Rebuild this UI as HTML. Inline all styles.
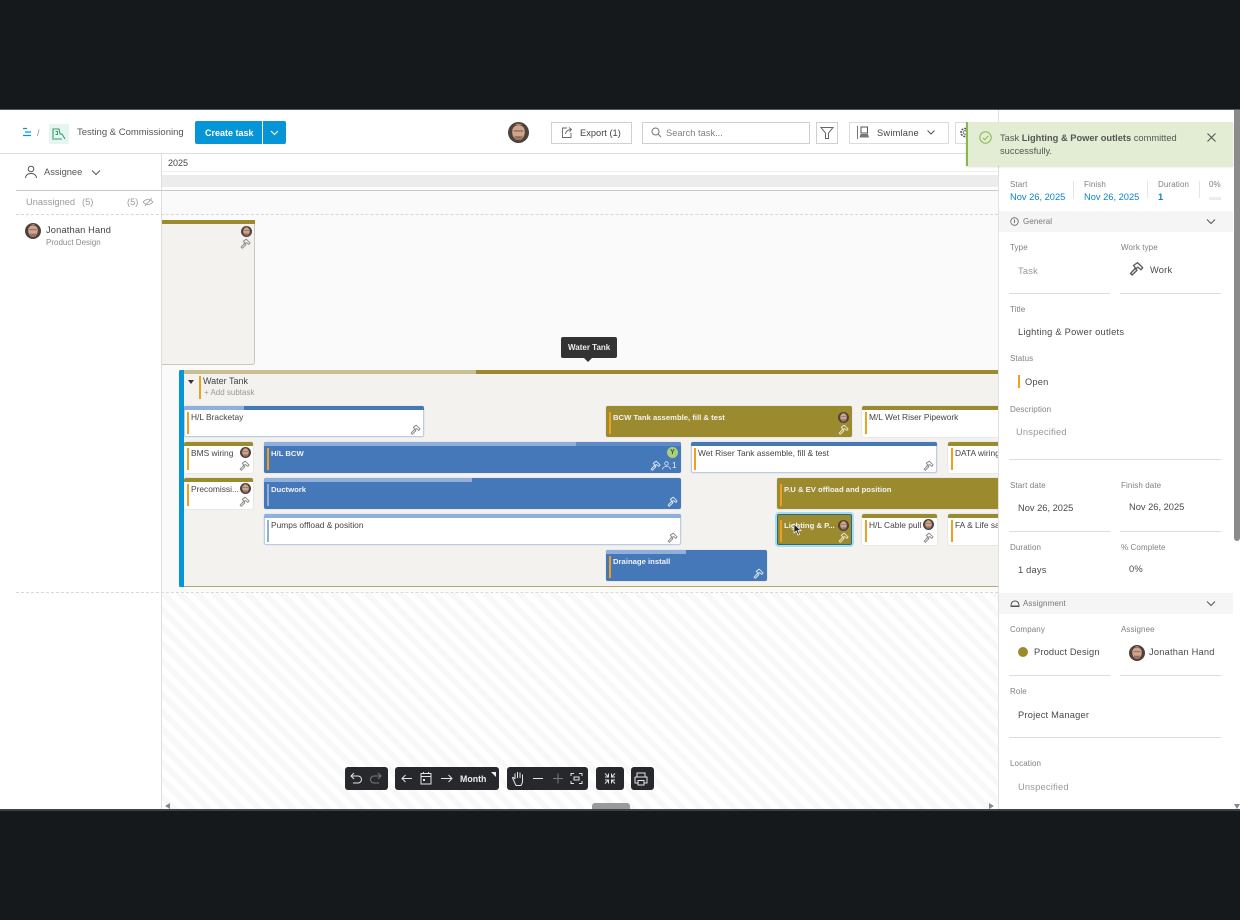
<!DOCTYPE html>
<html lang="en"><head><meta charset="utf-8"><title>Testing &amp; Commissioning</title>
<style>
html,body{margin:0;padding:0;background:#15191b;width:1240px;height:920px;overflow:hidden}
body{position:relative;font-family:"Liberation Sans",sans-serif;color:#3c3c3c}
div,span.a,svg.a{position:absolute;box-sizing:border-box}
.t{position:absolute;white-space:nowrap;line-height:12px;font-size:9px}
.l{color:#808080;font-size:8px;letter-spacing:.1px;margin-top:1px}
.v{font-size:9.3px;color:#4a4a4a;letter-spacing:.2px;margin-top:1px}
.d{letter-spacing:0}
.ln{height:1px;background:#dcdcdc}
.c{border-radius:2px;height:31px;overflow:hidden;box-shadow:0 0 1px rgba(0,0,0,.25)}
.c .top{left:0;top:0;height:4px;width:100%}
.c .pg{left:0;top:0;height:4px;background:#8fb0dc}
.c .bar{left:3px;top:6px;width:2px;height:22px;background:#f0a020}
.c .t{left:7px;top:5px;font-size:8.4px}
.w{background:#fff;color:#444}
.b{background:#4478b8;color:#fff}
.o{background:#9c8a2f;color:#fff}
.c.b .t,.c.o .t{font-weight:bold;color:#f4f4f4;font-size:7.7px;margin-top:1px}
.sb{box-shadow:inset 0 0 0 1px #b7cde8,0 0 1px rgba(0,0,0,.25)}
.tb{background:#26282b;border-radius:3px;top:767px;height:23px}
</style></head><body>
<svg width="0" height="0" style="position:absolute"><defs>
<symbol id="h" viewBox="0 0 12 12"><path d="M1.200 10 4.900 6 6.400 7.400 2.500 11.200Z M3.600 3.600 6.800 1.300 11 5.400 9.600 7 7 4.900 5.600 6.100Z" fill="none" stroke="currentColor" stroke-width="1.050" stroke-linejoin="round"/></symbol>
<symbol id="av" viewBox="0 0 20 20"><circle cx="10" cy="10" r="10" fill="#4e423c"/><ellipse cx="10" cy="9.500" rx="6" ry="7.800" fill="#d0a58c"/><path d="M4.500 5.500Q10 .5 15.500 5.500L15 4Q10 1 5 4Z" fill="#3a2e28"/><path d="M5.500 8.500h3.500M11 8.500h3.500M9 8.500h2" fill="none" stroke="#5a4d46" stroke-width=".8"/><path d="M6 13Q10 14 14 13L13.500 16.500Q10 18 6.500 16.500Z" fill="#96796a"/><path d="M8.500 14.500h3" stroke="#b04a4a" stroke-width=".7"/></symbol>
</defs></svg>

<!-- app frame -->
<div style="left:0;top:109px;width:1240px;height:1px;background:#55585a"></div>
<div style="left:0;top:110px;width:1240px;height:699px;background:#fff;overflow:hidden">
</div>
<div style="left:0;top:809px;width:1240px;height:2px;background:#3e4244"></div>

<!-- header -->
<div style="left:0;top:153px;width:998px;height:1px;background:#dedede"></div>
<svg class="a" style="left:22px;top:127px" width="10" height="10" viewBox="0 0 10 10"><path d="M1 1.500h4M3 5h6M1 8.500h8" stroke="#0696d7" stroke-width="1.200" fill="none"/></svg>
<span class="t" style="left:37px;top:127px;color:#888">/</span>
<div style="left:49px;top:124px;width:20px;height:20px;background:#e5f6f2;border-radius:2px"></div>
<svg class="a" style="left:51px;top:126px" width="16" height="16" viewBox="0 0 16 16"><path d="M2 12V3h6l1 5 2 0 3 5M1 13h10" fill="none" stroke="#3a9a6a" stroke-width="1.100"/><path d="M4.500 5.500h2v3h-2" fill="none" stroke="#3a9a6a"/></svg>
<span class="t" style="left:77px;top:127px;font-size:9.5px;color:#555">Testing &amp; Commissioning</span>
<div style="left:195px;top:121px;width:67px;height:23px;background:#0696d7;border-radius:2px 0 0 2px"></div>
<span class="t" style="left:205px;top:127px;font-size:9px;color:#fff;font-weight:bold">Create task</span>
<div style="left:263px;top:121px;width:23px;height:23px;background:#0696d7;border-radius:0 2px 2px 0"></div>
<svg class="a" style="left:269px;top:129px" width="11" height="8" viewBox="0 0 11 8"><path d="M2 2l3.500 3.500L9 2" fill="none" stroke="#fff" stroke-width="1.100"/></svg>
<svg class="a" style="left:508px;top:122px" width="21" height="21"><use href="#av"/></svg>
<div style="left:551px;top:122px;width:81px;height:22px;border:1px solid #d0d0d0"></div>
<svg class="a" style="left:561px;top:126px" width="12" height="13" viewBox="0 0 12 13"><path d="M6 2H1.500v9.500H10V7M4.500 8Q5 4 10 3.500M8 1.500l2.500 2L8.500 6" fill="none" stroke="#666" stroke-width=".9"/></svg>
<span class="t" style="left:580px;top:127px;font-size:9.300px;color:#444">Export (1)</span>
<div style="left:642px;top:122px;width:168px;height:22px;border:1px solid #d0d0d0"></div>
<svg class="a" style="left:651px;top:127px" width="11" height="11" viewBox="0 0 11 11"><circle cx="4.500" cy="4.500" r="3.500" fill="none" stroke="#777"/><path d="M7 7l3 3" stroke="#777"/></svg>
<span class="t" style="left:666px;top:127px;font-size:9.300px;color:#808080">Search task...</span>
<div style="left:816px;top:122px;width:22px;height:22px;border:1px solid #d0d0d0"></div>
<svg class="a" style="left:820px;top:126px" width="14" height="14" viewBox="0 0 14 14"><path d="M1 1.500h12L8.500 7v5.500h-3V7Z" fill="none" stroke="#666"/></svg>
<div style="left:849px;top:122px;width:100px;height:22px;border:1px solid #dcdcdc"></div>
<svg class="a" style="left:857px;top:125px" width="13" height="15" viewBox="0 0 13 15"><path d="M.5 1v13" stroke="#777" fill="none"/><path d="M4 2h6.500v6H4Z" fill="none" stroke="#555"/><path d="M3.500 9h7.500l1 3.500H2.500Z" fill="#777"/></svg>
<span class="t" style="left:877px;top:127px;font-size:9.300px;color:#444;letter-spacing:.2px">Swimlane</span>
<svg class="a" style="left:926px;top:129px" width="10" height="7" viewBox="0 0 10 7"><path d="M1.500 1.500L5 5l3.500-3.500" fill="none" stroke="#555"/></svg>
<div style="left:955px;top:122px;width:14px;height:22px;border:1px solid #dcdcdc"></div>
<svg class="a" style="left:959px;top:126px" width="12" height="13" viewBox="0 0 12 13"><circle cx="6" cy="6.500" r="4" fill="none" stroke="#555" stroke-width="1.500" stroke-dasharray="2 1"/><circle cx="6" cy="6.500" r="1.800" fill="none" stroke="#555" stroke-width=".8"/></svg>

<!-- left column -->
<div style="left:161px;top:154px;width:1px;height:655px;background:#dedede"></div>
<svg class="a" style="left:24px;top:165px" width="14" height="14" viewBox="0 0 14 14"><circle cx="7" cy="4" r="2.800" fill="none" stroke="#555"/><path d="M1.500 13Q2 8.500 7 8.500T12.500 13" fill="none" stroke="#555"/></svg>
<span class="t" style="left:44px;top:166px;font-size:9.300px;color:#555">Assignee</span>
<svg class="a" style="left:91px;top:169px" width="10" height="7" viewBox="0 0 10 7"><path d="M1 1.500L5 5.500l4-4" fill="none" stroke="#555"/></svg>
<div style="left:16px;top:190px;width:982px;height:1px;background:#c9c9c9"></div>
<span class="t" style="left:26px;top:196px;font-size:9.300px;color:#9a9a9a">Unassigned</span>
<span class="t" style="left:82px;top:196px;font-size:9.300px;color:#9a9a9a">(5)</span>
<span class="t" style="left:127px;top:196px;font-size:9.300px;color:#9a9a9a">(5)</span>
<svg class="a" style="left:142px;top:197px" width="12" height="10" viewBox="0 0 12 10"><path d="M1 5q5-5 10 0q-5 5-10 0M3 9l7-8" fill="none" stroke="#9a9a9a" stroke-width=".8"/></svg>
<svg class="a" style="left:25px;top:223px" width="16" height="16"><use href="#av"/></svg>
<span class="t" style="left:46px;top:224px;font-size:9.300px;color:#444;letter-spacing:.15px">Jonathan Hand</span>
<span class="t" style="left:46px;top:237px;font-size:8px;color:#8c8c8c">Product Design</span>

<!-- timeline head -->
<span class="t" style="left:168px;top:157px;font-size:9px;color:#444">2025</span>
<div style="left:162px;top:171px;width:836px;height:1px;background:#efefef"></div>
<div style="left:162px;top:175px;width:836px;height:12px;background:#ececec"></div>
<div style="left:162px;top:191px;width:836px;height:401px;background:#fafafb"></div>
<div style="left:16px;top:214px;width:982px;border-top:1px dashed #d8d8d8"></div>
<div style="left:16px;top:592px;width:982px;border-top:1px dashed #d8d8d8"></div>
<div style="left:162px;top:593px;width:836px;height:216px;background:repeating-linear-gradient(45deg,#fff 0 6px,#f8f8f8 6px 12px)"></div>

<!-- first group card -->
<div style="left:162px;top:220px;width:93px;height:145px;background:#f3f2ef;border:1px solid #c9c7c0;border-left:0;border-radius:0 2px 3px 0"></div>
<div style="left:162px;top:220px;width:93px;height:4px;background:#9c8a2f"></div>
<svg class="a" style="left:241px;top:226px" width="11" height="11"><use href="#av"/></svg>
<svg class="a" style="left:240px;top:238px;color:#8a8a8a" width="11" height="11"><use href="#h"/></svg>

<!-- tooltip -->
<div style="left:561px;top:337px;width:56px;height:21px;background:#333;border-radius:2px"></div>
<div style="left:584px;top:358px;width:0;height:0;border:4px solid transparent;border-top-color:#333;border-bottom:0"></div>
<span class="t" style="left:568px;top:342px;font-size:8px;font-weight:bold;color:#eee">Water Tank</span>

<!-- parent -->
<div style="left:179px;top:370px;width:819px;height:217px;background:#f3f2ef;border-bottom:1px solid #b5a968"></div>
<div style="left:179px;top:370px;width:819px;height:4px;background:#9c8a2f"></div>
<div style="left:179px;top:370px;width:297px;height:4px;background:#c9c091"></div>
<div style="left:179px;top:370px;width:5px;height:217px;background:#0696d7;border-radius:2px 0 0 2px"></div>
<div style="left:188px;top:380px;width:0;height:0;border:3.500px solid transparent;border-top:4px solid #333;border-bottom:0"></div>
<div style="left:199px;top:376px;width:2px;height:23px;background:#f0a020"></div>
<span class="t" style="left:203px;top:375px;font-size:9px;color:#444">Water Tank</span>
<span class="t" style="left:204px;top:387px;font-size:8px;color:#999">+ Add subtask</span>

<!-- tasks -->
<div class="c w sb" style="left:184px;top:406px;width:240px"><div class="top" style="background:#4478b8"></div><div class="pg" style="width:60px"></div><div class="bar"></div><span class="t">H/L Bracketay</span><svg class="a" style="right:3px;bottom:2px;color:#8a8a8a" width="11" height="11"><use href="#h"/></svg></div>

<div class="c w" style="left:184px;top:442px;width:69px"><div class="top" style="background:#9c8a2f"></div><div class="bar"></div><span class="t">BMS wiring</span><svg class="a" style="right:2px;top:5px" width="11" height="11"><use href="#av"/></svg><svg class="a" style="right:3px;bottom:2px;color:#8a8a8a" width="11" height="11"><use href="#h"/></svg></div>

<div class="c w" style="left:184px;top:478px;width:69px"><div class="top" style="background:#9c8a2f"></div><div class="bar"></div><span class="t">Precomissi...</span><svg class="a" style="right:2px;top:5px" width="11" height="11"><use href="#av"/></svg><svg class="a" style="right:3px;bottom:2px;color:#8a8a8a" width="11" height="11"><use href="#h"/></svg></div>

<div class="c b" style="left:264px;top:442px;width:417px"><div class="top" style="background:#5f8cc6"></div><div class="pg" style="width:312px"></div><div class="bar"></div><span class="t">H/L BCW</span><div style="right:3px;top:5px;width:11px;height:11px;border-radius:50%;background:#a9cf7a;color:#3a5a20;font-size:7px;line-height:11px;text-align:center;font-weight:bold">Y</div><svg class="a" style="right:20px;bottom:2px;color:#dce6f3" width="11" height="11"><use href="#h"/></svg><svg class="a" style="right:10px;bottom:3px" width="9" height="9" viewBox="0 0 9 9"><circle cx="4.500" cy="2.500" r="1.800" fill="none" stroke="#dce6f3" stroke-width=".8"/><path d="M.5 8.500Q1 5.500 4.500 5.500T8.500 8.500" fill="none" stroke="#dce6f3" stroke-width=".8"/></svg><span class="t" style="left:408px;top:16px;color:#e8eef7;font-weight:normal;font-size:8.400px">1</span></div>

<div class="c b" style="left:264px;top:478px;width:417px"><div class="pg" style="width:208px"></div><div class="bar" style="background:#8fb0dc"></div><span class="t">Ductwork</span><svg class="a" style="right:3px;bottom:2px;color:#dce6f3" width="11" height="11"><use href="#h"/></svg></div>

<div class="c w sb" style="left:264px;top:514px;width:417px"><div class="top" style="background:#8fb0dc"></div><div class="bar" style="background:#8fb0dc"></div><span class="t">Pumps offload &amp; position</span><svg class="a" style="right:3px;bottom:2px;color:#8a8a8a" width="11" height="11"><use href="#h"/></svg></div>

<div class="c o" style="left:606px;top:406px;width:246px"><div class="bar"></div><span class="t">BCW Tank assemble, fill &amp; test</span><svg class="a" style="right:3px;top:6px" width="11" height="11"><use href="#av"/></svg><svg class="a" style="right:3px;bottom:2px;color:#e8e4cc" width="11" height="11"><use href="#h"/></svg></div>

<div class="c w" style="left:862px;top:406px;width:136px;border-radius:2px 0 0 2px"><div class="top" style="background:#9c8a2f"></div><div class="bar"></div><span class="t">M/L Wet Riser Pipework</span></div>

<div class="c w sb" style="left:691px;top:442px;width:246px"><div class="top" style="background:#4478b8"></div><div class="bar"></div><span class="t">Wet Riser Tank assemble, fill &amp; test</span><svg class="a" style="right:3px;bottom:2px;color:#8a8a8a" width="11" height="11"><use href="#h"/></svg></div>

<div class="c w" style="left:948px;top:442px;width:50px;border-radius:2px 0 0 2px"><div class="top" style="background:#9c8a2f"></div><div class="bar"></div><span class="t">DATA wiring</span></div>

<div class="c o" style="left:777px;top:478px;width:221px;border-radius:2px 0 0 2px"><div class="bar"></div><span class="t">P.U &amp; EV offload and position</span></div>

<div class="c o" style="left:777px;top:514px;width:75px;overflow:visible;border:1px solid #2a6a78;box-shadow:0 0 0 2px #a5dcf0"><div class="bar" style="left:2px;top:5px"></div><span class="t" style="left:6px;top:4px">Lighting &amp; P...</span><svg class="a" style="right:2px;top:5px" width="11" height="11"><use href="#av"/></svg><svg class="a" style="right:2px;bottom:1px;color:#e8e4cc" width="11" height="11"><use href="#h"/></svg></div>
<svg class="a" style="left:793px;top:523px" width="9" height="13" viewBox="0 0 9 13"><path d="M1 1v9l2.300-2 1.700 4 1.500-.7L5 7.500h3Z" fill="#222" stroke="#fff" stroke-width=".7"/></svg>

<div class="c w" style="left:862px;top:514px;width:75px"><div class="top" style="background:#9c8a2f"></div><div class="bar"></div><span class="t">H/L Cable pull</span><svg class="a" style="right:3px;top:5px" width="11" height="11"><use href="#av"/></svg><svg class="a" style="right:3px;bottom:2px;color:#8a8a8a" width="11" height="11"><use href="#h"/></svg></div>

<div class="c w" style="left:948px;top:514px;width:50px;border-radius:2px 0 0 2px"><div class="top" style="background:#9c8a2f"></div><div class="bar"></div><span class="t">FA &amp; Life sa</span></div>

<div class="c b" style="left:606px;top:550px;width:161px"><div class="pg" style="width:80px"></div><div class="bar"></div><span class="t">Drainage install</span><svg class="a" style="right:3px;bottom:2px;color:#dce6f3" width="11" height="11"><use href="#h"/></svg></div>

<!-- toolbar -->
<div class="tb" style="left:345px;width:43px"></div>
<div class="tb" style="left:395px;width:104px"></div>
<div class="tb" style="left:507px;width:81px"></div>
<div class="tb" style="left:596px;width:28px"></div>
<div class="tb" style="left:631px;width:23px"></div>
<svg class="a" style="left:345px;top:767px" width="310" height="23" viewBox="0 0 310 23" fill="none" stroke="#e4e4e4" stroke-width="1">
<path d="M9 6L6 9l3 3M6 9h7a3.500 3.500 0 0 1 0 7H8"/>
<path d="M33 6l3 3-3 3M36 9h-7a3.500 3.500 0 0 0 0 7h5" stroke="#77797b"/>
<path d="M67 11.500H57M60.500 8l-3.500 3.500 3.500 3.500"/>
<path d="M76 6.500h10v10.500H76zM76 9.500h10M78.500 5v2M83.500 5v2"/><path d="M78 12h2v2h-2z" fill="#e4e4e4" stroke="none"/>
<path d="M96 11.500h11M103.500 8l3.500 3.500-3.500 3.500"/>
<path d="M170 12V6.500M172.500 11V5M175 11V5.500M177.500 12V7.500M170 12l-1.500-1.500Q167 10 168 12l3 6.500h5l1.500-3.500V10"/>
<path d="M188 11.500h10"/>
<path d="M208 11.500h10M213 6.500v10" stroke="#77797b"/>
<path d="M226 9V6.500h3M234 6.500h3V9M237 14v2.500h-3M229 16.500h-3V14M229 10h5v3h-5z"/>
<path d="M260 6.500l3.500 3.500M260 10h3.500V6.500M270 6.500L266.500 10M266.500 6.500V10h3.500M260 16.500l3.500-3.500M260 13h3.500v3.500M270 16.500L266.500 13M266.500 16.500V13h3.500"/>
<path d="M292 10V6h8v4M290 10h12v6h-3M293 16h-3v-6M293 13.500h6V18h-6z"/>
</svg>
<span class="t" style="left:460px;top:773px;font-size:8.800px;font-weight:bold;color:#eee">Month</span>
<div style="left:491px;top:772px;width:0;height:0;border-style:solid;border-width:0 5px 5px 0;border-color:transparent #eee transparent transparent"></div>

<!-- timeline scrollbar -->
<div style="left:165px;top:803px;width:0;height:0;border:3.500px solid transparent;border-right:5px solid #888;border-left:0"></div>
<div style="left:592px;top:803px;width:38px;height:6px;background:#9a9a9a;border-radius:3px 3px 0 0"></div>
<div style="left:989px;top:803px;width:0;height:0;border:3.500px solid transparent;border-left:5px solid #888;border-right:0"></div>

<!-- right panel -->
<div style="left:998px;top:110px;width:235px;height:699px;background:#fff;border-left:1px solid #e2e2e2"></div>
<div style="left:1234px;top:110px;width:6px;height:431px;background:#8b8b8b;border-radius:0 0 3px 3px"></div>
<div style="left:1234px;top:804px;width:0;height:0;border:3px solid transparent;border-top:5px solid #888;border-bottom:0"></div>

<span class="t l" style="left:1010px;top:178px">Start</span>
<span class="t" style="left:1010px;top:191px;font-size:9.300px;color:#0a84c6">Nov 26, 2025</span>
<div style="left:1073px;top:181px;width:1px;height:17px;background:#e4e4e4"></div>
<span class="t l" style="left:1084px;top:178px">Finish</span>
<span class="t" style="left:1084px;top:191px;font-size:9.300px;color:#0a84c6">Nov 26, 2025</span>
<div style="left:1147px;top:181px;width:1px;height:17px;background:#e4e4e4"></div>
<span class="t l" style="left:1158px;top:178px">Duration</span>
<span class="t" style="left:1158px;top:191px;font-size:9.300px;color:#0a84c6;font-weight:bold">1</span>
<div style="left:1199px;top:181px;width:1px;height:17px;background:#e4e4e4"></div>
<span class="t l" style="left:1209px;top:178px">0%</span>
<div style="left:1209px;top:197px;width:12px;height:3px;background:#ececec"></div>

<div style="left:999px;top:211px;width:234px;height:21px;background:#f5f5f5"></div>
<svg class="a" style="left:1010px;top:217px" width="9" height="9" viewBox="0 0 9 9"><circle cx="4.500" cy="4.500" r="3.800" fill="none" stroke="#666" stroke-width=".8"/><path d="M4.500 2.500v3.500" stroke="#666" stroke-width=".9"/></svg>
<span class="t l" style="left:1023px;top:215px;color:#777">General</span>
<svg class="a" style="left:1206px;top:218px" width="10" height="7" viewBox="0 0 10 7"><path d="M1 1.500L5 5.500l4-4" fill="none" stroke="#555"/></svg>

<span class="t l" style="left:1010px;top:241px">Type</span>
<span class="t v" style="left:1018px;top:264px;color:#999">Task</span>
<div class="ln" style="left:1009px;top:293px;width:101px"></div>
<span class="t l" style="left:1121px;top:241px">Work type</span>
<svg class="a" style="left:1129px;top:261px;color:#555" width="15" height="15"><use href="#h"/></svg>
<span class="t v" style="left:1150px;top:263px">Work</span>
<div class="ln" style="left:1120px;top:293px;width:101px"></div>

<span class="t l" style="left:1010px;top:303px">Title</span>
<span class="t v" style="left:1018px;top:325px;letter-spacing:.25px">Lighting &amp; Power outlets</span>
<span class="t l" style="left:1010px;top:352px">Status</span>
<div style="left:1018px;top:375px;width:2px;height:13px;background:#f0a020"></div>
<span class="t v" style="left:1025px;top:375px">Open</span>
<span class="t l" style="left:1010px;top:403px">Description</span>
<span class="t v" style="left:1016px;top:425px;color:#999">Unspecified</span>
<div class="ln" style="left:1009px;top:459px;width:212px"></div>

<span class="t l" style="left:1010px;top:479px">Start date</span>
<span class="t v d" style="left:1018px;top:501px">Nov 26, 2025</span>
<div class="ln" style="left:1009px;top:531px;width:101px"></div>
<span class="t l" style="left:1121px;top:479px">Finish date</span>
<span class="t v d" style="left:1129px;top:500px">Nov 26, 2025</span>
<div class="ln" style="left:1120px;top:531px;width:101px"></div>

<span class="t l" style="left:1010px;top:541px">Duration</span>
<span class="t v" style="left:1018px;top:563px">1 days</span>
<span class="t l" style="left:1121px;top:541px">% Complete</span>
<span class="t v" style="left:1129px;top:562px">0%</span>

<div style="left:999px;top:593px;width:234px;height:21px;background:#f5f5f5"></div>
<svg class="a" style="left:1010px;top:599px" width="10" height="9" viewBox="0 0 10 9"><path d="M1 7q0-5 4-5t4 5z M.5 7.500h9" fill="none" stroke="#555"/></svg>
<span class="t l" style="left:1023px;top:597px;color:#777">Assignment</span>
<svg class="a" style="left:1206px;top:600px" width="10" height="7" viewBox="0 0 10 7"><path d="M1 1.500L5 5.500l4-4" fill="none" stroke="#555"/></svg>

<span class="t l" style="left:1010px;top:623px">Company</span>
<div style="left:1018px;top:647px;width:10px;height:10px;border-radius:50%;background:#9c8a2f"></div>
<span class="t v" style="left:1034px;top:645px;letter-spacing:.15px">Product Design</span>
<div class="ln" style="left:1009px;top:675px;width:101px"></div>
<span class="t l" style="left:1121px;top:623px">Assignee</span>
<svg class="a" style="left:1129px;top:645px" width="16" height="16"><use href="#av"/></svg>
<span class="t v" style="left:1149px;top:645px">Jonathan Hand</span>
<div class="ln" style="left:1120px;top:675px;width:101px"></div>

<span class="t l" style="left:1010px;top:685px">Role</span>
<span class="t v" style="left:1018px;top:708px">Project Manager</span>
<div class="ln" style="left:1009px;top:737px;width:212px"></div>

<span class="t l" style="left:1010px;top:757px">Location</span>
<span class="t v" style="left:1018px;top:780px;color:#999">Unspecified</span>

<!-- toast -->
<div style="left:966px;top:122px;width:267px;height:44px;background:#e3edd3;border-left:2px solid #87b84a;box-shadow:0 1px 2px rgba(0,0,0,.15)"></div>
<svg class="a" style="left:979px;top:131px" width="13" height="13" viewBox="0 0 13 13"><circle cx="6.500" cy="6.500" r="5.700" fill="none" stroke="#87b84a"/><path d="M3.800 6.800l2 2 3.500-4" fill="none" stroke="#87b84a"/></svg>
<span class="t" style="left:1000px;top:132px;font-size:9.300px;color:#555">Task <b>Lighting &amp; Power outlets</b> committed</span>
<span class="t" style="left:1000px;top:145px;font-size:9.300px;color:#555">successfully.</span>
<svg class="a" style="left:1206px;top:132px" width="11" height="11" viewBox="0 0 11 11"><path d="M1.500 1.500l8 8M9.500 1.500l-8 8" stroke="#555" stroke-width="1.100"/></svg>
</body></html>
